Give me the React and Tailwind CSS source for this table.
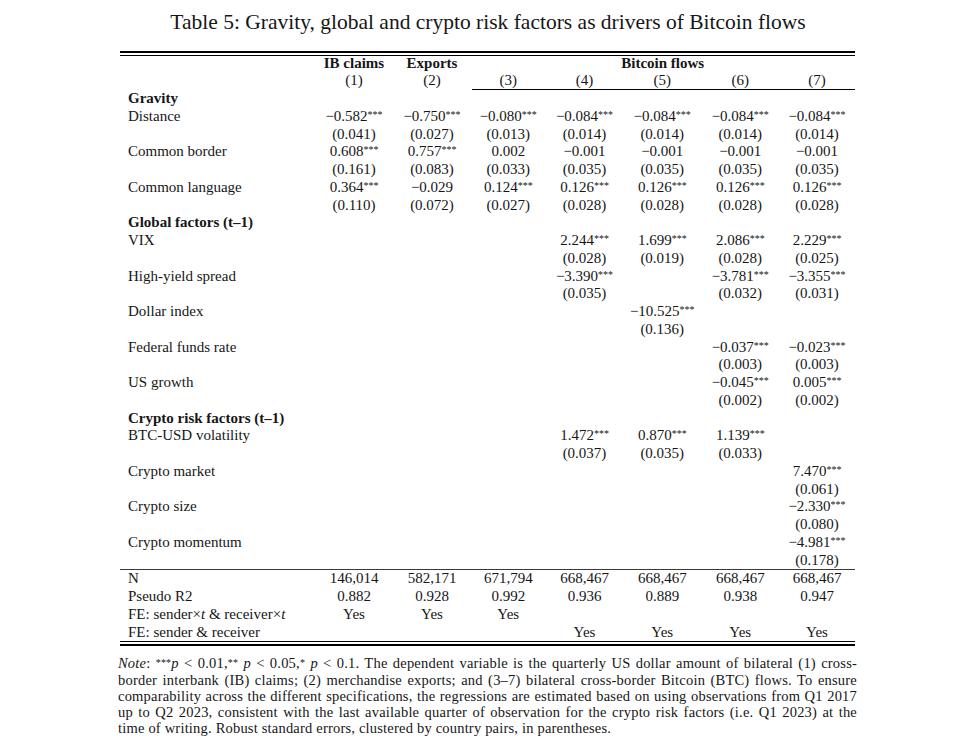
import React from 'react';

const cols = "grid grid-cols-[194.5px_79px_77px_75.5px_77px_78.5px_77.5px_76px]";

const body = [
  { head: 'Gravity' },
  { label: 'Distance', v: ['−0.582***', '−0.750***', '−0.080***', '−0.084***', '−0.084***', '−0.084***', '−0.084***'] },
  { v: ['(0.041)', '(0.027)', '(0.013)', '(0.014)', '(0.014)', '(0.014)', '(0.014)'] },
  { label: 'Common border', v: ['0.608***', '0.757***', '0.002', '−0.001', '−0.001', '−0.001', '−0.001'] },
  { v: ['(0.161)', '(0.083)', '(0.033)', '(0.035)', '(0.035)', '(0.035)', '(0.035)'] },
  { label: 'Common language', v: ['0.364***', '−0.029', '0.124***', '0.126***', '0.126***', '0.126***', '0.126***'] },
  { v: ['(0.110)', '(0.072)', '(0.027)', '(0.028)', '(0.028)', '(0.028)', '(0.028)'] },
  { head: 'Global factors (t–1)' },
  { label: 'VIX', v: ['', '', '', '2.244***', '1.699***', '2.086***', '2.229***'] },
  { v: ['', '', '', '(0.028)', '(0.019)', '(0.028)', '(0.025)'] },
  { label: 'High-yield spread', v: ['', '', '', '−3.390***', '', '−3.781***', '−3.355***'] },
  { v: ['', '', '', '(0.035)', '', '(0.032)', '(0.031)'] },
  { label: 'Dollar index', v: ['', '', '', '', '−10.525***', '', ''] },
  { v: ['', '', '', '', '(0.136)', '', ''] },
  { label: 'Federal funds rate', v: ['', '', '', '', '', '−0.037***', '−0.023***'] },
  { v: ['', '', '', '', '', '(0.003)', '(0.003)'] },
  { label: 'US growth', v: ['', '', '', '', '', '−0.045***', '0.005***'] },
  { v: ['', '', '', '', '', '(0.002)', '(0.002)'] },
  { head: 'Crypto risk factors (t–1)' },
  { label: 'BTC-USD volatility', v: ['', '', '', '1.472***', '0.870***', '1.139***', ''] },
  { v: ['', '', '', '(0.037)', '(0.035)', '(0.033)', ''] },
  { label: 'Crypto market', v: ['', '', '', '', '', '', '7.470***'] },
  { v: ['', '', '', '', '', '', '(0.061)'] },
  { label: 'Crypto size', v: ['', '', '', '', '', '', '−2.330***'] },
  { v: ['', '', '', '', '', '', '(0.080)'] },
  { label: 'Crypto momentum', v: ['', '', '', '', '', '', '−4.981***'] },
  { v: ['', '', '', '', '', '', '(0.178)'] },
];

const foot = [
  { label: 'N', v: ['146,014', '582,171', '671,794', '668,467', '668,467', '668,467', '668,467'] },
  { label: 'Pseudo R2', v: ['0.882', '0.928', '0.992', '0.936', '0.889', '0.938', '0.947'] },
  { label: <>FE: sender×<i>t</i> &amp; receiver×<i>t</i></>, v: ['Yes', 'Yes', 'Yes', '', '', '', ''] },
  { label: 'FE: sender & receiver', v: ['', '', '', 'Yes', 'Yes', 'Yes', 'Yes'] },
];

function Val({ s }) {
  const m = s.match(/^(.*?)(\*+)$/);
  if (!m) return s;
  return <>{m[1]}<sup className="text-[10px] top-[-0.3em]">{m[2]}</sup></>;
}

function Row({ r }) {
  if (r.head) {
    return <div className={`${cols} h-[17.75px] leading-[17.75px]`}><div className="pl-2 font-bold col-span-8">{r.head}</div></div>;
  }
  return (
    <div className={`${cols} h-[17.75px] leading-[17.75px]`}>
      <div className="pl-2 whitespace-nowrap">{r.label}</div>
      {r.v.map((s, i) => <div key={i} className="text-center whitespace-nowrap"><Val s={s} /></div>)}
    </div>
  );
}

const J = "text-justify [text-align-last:justify] whitespace-nowrap";
const S = "text-[10px] top-[-0.25em]";

export default function App() {
  return (
    <div className="w-[976px] h-[739px] bg-white text-[#161616] font-['Liberation_Serif',serif] overflow-hidden">
      <h1 className="pt-[9px] text-center text-[21.5px] leading-[26px]">Table 5: Gravity, global and crypto risk factors as drivers of Bitcoin flows</h1>

      <div className="ml-[120px] w-[735px] mt-[16px] text-[15px]">
        <div className="h-[2px] bg-black" />
        <div className="h-[2px]" />
        <div className="h-px bg-black" />

        <div className={`${cols} h-[15px] leading-[15px] font-bold`}>
          <div />
          <div className="text-center whitespace-nowrap">IB claims</div>
          <div className="text-center">Exports</div>
          <div className="col-span-5 text-center">Bitcoin flows</div>
        </div>
        <div className={`${cols} h-[18px] leading-[18px]`}>
          <div />
          {[1, 2, 3, 4, 5, 6, 7].map(n => <div key={n} className="text-center">({n})</div>)}
        </div>
        <div className={cols}>
          <div className="col-start-4 col-span-5 ml-[1.5px] h-px bg-black" />
        </div>

        {body.map((r, i) => <Row key={i} r={r} />)}

        <div className="h-px bg-[#3a3a3a]" />

        {foot.map((r, i) => <Row key={i} r={r} />)}

        <div className="h-px bg-black" />
        <div className="h-[2px]" />
        <div className="h-[2px] bg-black" />

        <div className="-ml-[2px] w-[739px] mt-[9px] text-[14.5px] leading-[16.25px] tracking-[0.2px]">
          <div className={J}><i>Note</i>: <sup className={S}>***</sup><i>p</i> &lt; 0.01,<sup className={S}>**</sup> <i>p</i> &lt; 0.05,<sup className={S}>*</sup> <i>p</i> &lt; 0.1. The dependent variable is the quarterly US dollar amount of bilateral (1) cross-</div>
          <div className={J}>border interbank (IB) claims; (2) merchandise exports; and (3–7) bilateral cross-border Bitcoin (BTC) flows. To ensure</div>
          <div className={J}>comparability across the different specifications, the regressions are estimated based on using observations from Q1 2017</div>
          <div className={J}>up to Q2 2023, consistent with the last available quarter of observation for the crypto risk factors (i.e. Q1 2023) at the</div>
          <div className="whitespace-nowrap">time of writing. Robust standard errors, clustered by country pairs, in parentheses.</div>
        </div>
      </div>
    </div>
  );
}
